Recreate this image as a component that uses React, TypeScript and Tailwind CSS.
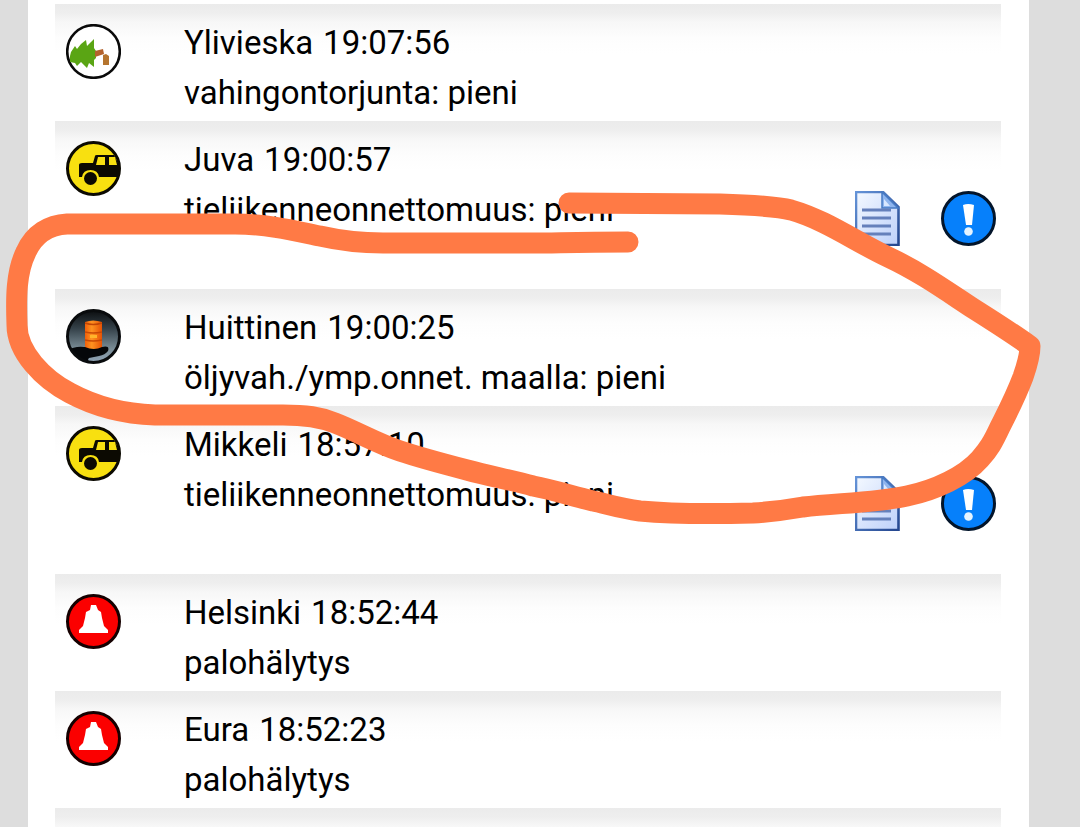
type IncidentKind = "damage" | "traffic" | "oil" | "fire";

interface Incident {
  place: string;
  time: string;
  description: string;
  kind: IncidentKind;
  hasReport?: boolean;
}

const incidents: Incident[] = [
  { place: "Ylivieska", time: "19:07:56", description: "vahingontorjunta: pieni", kind: "damage" },
  { place: "Juva", time: "19:00:57", description: "tieliikenneonnettomuus: pieni", kind: "traffic", hasReport: true },
  { place: "Huittinen", time: "19:00:25", description: "öljyvah./ymp.onnet. maalla: pieni", kind: "oil" },
  { place: "Mikkeli", time: "18:57:10", description: "tieliikenneonnettomuus: pieni", kind: "traffic", hasReport: true },
  { place: "Helsinki", time: "18:52:44", description: "palohälytys", kind: "fire" },
  { place: "Eura", time: "18:52:23", description: "palohälytys", kind: "fire" },
];

const DamageIcon = () => (
  <svg viewBox="0 0 55 55" className="size-[55px]" aria-hidden="true">
    <circle cx="27.5" cy="27.5" r="26.3" fill="#fff" stroke="#0a0a0a" strokeWidth="2.6" />
    <path
      d="M4 32 L5 28 L9 22 L11 25 L15 20 L20 16 L21 22 L25 18 L28 15 L28 24 L30 27 L30 34 L28 36 L28 43 L23 39 L21 44 L15 38 L11 42 L9 39 L4 38 Z"
      fill="#5aa514"
    />
    <path d="M29 27 L37 25 L38 30 L29 33 Z" fill="#b3622d" />
    <path d="M37 31 L40 30 L43 32 V41 H37 Z" fill="#b5752f" />
  </svg>
);

const TrafficIcon = () => (
  <svg viewBox="0 0 55 55" className="size-[55px]" aria-hidden="true">
    <circle cx="27.5" cy="27.5" r="26" fill="#f8e010" stroke="#0c0a02" strokeWidth="3" />
    <path
      d="M13 36 V24 Q13 22 16 22 L27 22 L29 15 Q29 14 31 14 H48 L53 24 V36 H33 Q32 29 24.5 29 Q17 29 16 36 Z"
      fill="#0c0a02"
    />
    <path d="M32 16 H39 V24 H30 Z" fill="#f8e010" />
    <path d="M43 16 H49 L51 24 H43 Z" fill="#f8e010" />
    <circle cx="24.5" cy="37.5" r="6.5" fill="#0c0a02" />
  </svg>
);

const OilIcon = () => (
  <svg viewBox="0 0 55 55" className="size-[55px]" aria-hidden="true">
    <defs>
      <linearGradient id="oil-sky" x1="0" y1="0" x2="0" y2="1">
        <stop offset="0" stopColor="#0b0d0f" />
        <stop offset="0.35" stopColor="#35424a" />
        <stop offset="0.75" stopColor="#7c8f99" />
        <stop offset="1" stopColor="#8fa3b5" />
      </linearGradient>
      <linearGradient id="oil-barrel" x1="0" y1="0" x2="1" y2="0">
        <stop offset="0" stopColor="#f05f0a" />
        <stop offset="0.4" stopColor="#ff9320" />
        <stop offset="1" stopColor="#e65205" />
      </linearGradient>
      <clipPath id="oil-clip">
        <circle cx="27.5" cy="27.5" r="26" />
      </clipPath>
    </defs>
    <circle cx="27.5" cy="27.5" r="26" fill="url(#oil-sky)" />
    <g clipPath="url(#oil-clip)">
      <path
        d="M0 42 Q8 37 18 38 L36 38 Q44 36 42 42 Q39 46 33 47 L23 49 Q20 52 27 55 H12 L2 47 Z"
        fill="#05070a"
      />
    </g>
    <path d="M19 13 Q27 10 36 13 V38 Q28 42 19 38 Z" fill="url(#oil-barrel)" />
    <path d="M19 14 Q27 17 36 14" fill="none" stroke="#c24605" strokeWidth="1.5" />
    <path d="M19 23 Q27 25 36 23 M19 31 Q27 33 36 31" fill="none" stroke="#c84805" strokeWidth="1.5" />
    <path d="M24 26 H31 V29 H24 Z" fill="#ffb52b" />
    <circle cx="27.5" cy="27.5" r="26" fill="none" stroke="#090b0d" strokeWidth="3" />
  </svg>
);

const FireIcon = () => (
  <svg viewBox="0 0 55 55" className="size-[55px]" aria-hidden="true">
    <circle cx="27.5" cy="27.5" r="26" fill="#fb0000" stroke="#150000" strokeWidth="3" />
    <path
      d="M25 11 H30 L32 16 L35 18 L36 24 L38 32 L42 36 V39 H13 V36 L17 32 L19 24 L20 18 L24 16 Z"
      fill="#fff"
    />
  </svg>
);

const ReportIcon = () => (
  <svg viewBox="0 0 45 55" className="h-[55px] w-[45px]" aria-hidden="true">
    <defs>
      <linearGradient id="report-paper" x1="0" y1="0" x2="1" y2="1">
        <stop offset="0" stopColor="#f4f9ff" />
        <stop offset="1" stopColor="#bdd0fa" />
      </linearGradient>
      <linearGradient id="report-edge" x1="0" y1="0" x2="1" y2="1">
        <stop offset="0" stopColor="#6594d8" />
        <stop offset="1" stopColor="#24468f" />
      </linearGradient>
    </defs>
    <path d="M1 1 H28 L43.5 16 V54 H1 Z" fill="url(#report-paper)" stroke="url(#report-edge)" strokeWidth="2.6" />
    <path d="M27 1 L43 17 H27 Z" fill="#8fb5ee" stroke="#477bc4" strokeWidth="1.5" />
    <path d="M29 8 V15 H35 Z" fill="#d9e8ff" />
    <path d="M7 19 H36 M7 27 H36 M7 35 H36 M7 43 H36" stroke="#6580bb" strokeWidth="2.8" />
  </svg>
);

const AlertIcon = () => (
  <svg viewBox="0 0 55 55" className="size-[55px]" aria-hidden="true">
    <circle cx="27.5" cy="27.5" r="26" fill="#0680fb" stroke="#03152b" strokeWidth="3" />
    <path d="M22 14 Q27 12 33 14 L31 34 H25 Z" fill="#fff" />
    <circle cx="27.5" cy="40.5" r="4.3" fill="#e6f4ff" />
  </svg>
);

const icons = {
  damage: DamageIcon,
  traffic: TrafficIcon,
  oil: OilIcon,
  fire: FireIcon,
};

const rowShade = "bg-[linear-gradient(#ebebeb_0px,#eeeeee_9px,#f7f7f7_18px,#fdfdfd_34px,#ffffff_50px)]";

const IncidentRow = ({ incident }: { incident: Incident }) => {
  const Icon = icons[incident.kind];

  return (
    <li className={`flex items-start pl-[11px] pr-[5px] ${rowShade} ${incident.hasReport ? "min-h-[168px]" : "min-h-[117px]"}`}>
      <div className="mt-5 shrink-0">
        <Icon />
      </div>
      <div className="ml-[63px] flex-1 pt-[14px] text-[33px] leading-[50px]">
        <p className="flex gap-[10px]">
          <span>{incident.place}</span>
          <time>{incident.time}</time>
        </p>
        <p>{incident.description}</p>
      </div>
      {incident.hasReport && (
        <div className="mt-[70px] flex shrink-0 gap-[41px]">
          <a href="#report" aria-label="Tiedote">
            <ReportIcon />
          </a>
          <a href="#alert" aria-label="Lisätiedot">
            <AlertIcon />
          </a>
        </div>
      )}
    </li>
  );
};

// hand-drawn marker around the Huittinen row
const Marker = () => (
  <svg viewBox="0 0 1080 827" className="pointer-events-none absolute top-0 left-0 w-full" aria-hidden="true">
    <path
      d="M569 203 L720 204 C752 205 775 206 791 210 C826 220 856 242 888 257 C920 272 945 290 974 309 C993 321 1012 333 1030 346 Q1030 357 1023 377 C1015 398 1008 411 1000 427 C993 442 989 449 980 459 C965 476 936 490 907 496 C875 503 836 503 803 507 C786 510 770 512 753 513 C715 514 672 514 640 511 C618 508 604 503 593 501 C572 496 554 490 533 486 C511 480 489 476 467 470 C444 464 421 458 400 451 C376 443 356 431 335 423 C320 417 306 415 283 415 L155 415 C126 414 96 407 70 393 C43 379 17 352 17 325 C16 298 16 272 26 252 C34 234 49 225 67 224 L235 224 C270 224 300 232 320 236 C342 241 363 243 383 243 L530 243 C558 243 570 242 628 242"
      fill="none"
      stroke="#ff7a45"
      strokeWidth="21"
      strokeLinecap="round"
      strokeLinejoin="round"
    />
  </svg>
);

const App = () => {
  return (
    <div className="relative h-screen overflow-hidden bg-[#dddddd] pr-[51px] pl-7 font-[Roboto,sans-serif] text-black">
      <main className="min-h-full bg-white pt-1 pr-7 pl-[27px]">
        <ul>
          {incidents.map((incident) => (
            <IncidentRow key={incident.time} incident={incident} />
          ))}
          <li className={`min-h-[117px] ${rowShade}`} />
        </ul>
      </main>
      <Marker />
    </div>
  );
};

export default App;
